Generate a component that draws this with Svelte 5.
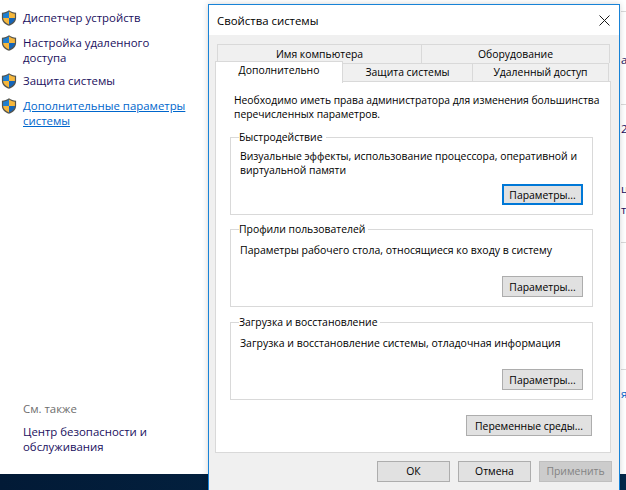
<script>
  const tasks = [
    { lines: 'Диспетчер устройств' },
    { lines: 'Настройка удаленного доступа' },
    { lines: 'Защита системы' },
    { lines: 'Дополнительные параметры системы', active: true }
  ];

  const groups = [
    { title: 'Быстродействие', text: 'Визуальные эффекты, использование процессора, оперативной и виртуальной памяти', focused: true },
    { title: 'Профили пользователей', text: 'Параметры рабочего стола, относящиеся ко входу в систему' },
    { title: 'Загрузка и восстановление', text: 'Загрузка и восстановление системы, отладочная информация' }
  ];

  // bits of the window behind the dialog, visible at the right edge
  const scraps = [
    { y: 52, ch: 'а' },
    { y: 121, ch: '2' },
    { y: 181, ch: 'ц' },
    { y: 202, ch: 'т' },
    { y: 386, ch: 'я', blue: true }
  ];
  const rules = [11, 104, 242, 369];
</script>

<div class="desktop">
  <aside class="sidebar">
    <ul class="tasks">
      {#each tasks as task}
        <li>
          <svg class="shield" width="16" height="16" viewBox="0 0 16 16" aria-hidden="true">
            <path d="M8 .2C6 1.800 3.400 2.600.9 2.700v5.200c0 3.600 3 6.400 7.100 7.900 4.100-1.500 7.100-4.300 7.100-7.900V2.700C12.600 2.600 10 1.800 8 .2z" fill="#55554e"/>
            <path d="M8 1.600C6.300 2.800 4.300 3.500 2.100 3.800V8H8z" fill="#1f7fd0"/>
            <path d="M8 1.600c1.700 1.200 3.700 1.900 5.900 2.200V8H8z" fill="#f6b73c"/>
            <path d="M2.100 8H8v6.400C4.600 13.100 2.100 10.900 2.100 8z" fill="#f6b73c"/>
            <path d="M13.900 8H8v6.400c3.400-1.300 5.900-3.500 5.900-6.400z" fill="#1565b8"/>
          </svg>
          <a href="#top" class:active={task.active}>{task.lines}</a>
        </li>
      {/each}
    </ul>

    <div class="see-also">
      <h2>См. также</h2>
      <a href="#top">Центр безопасности и обслуживания</a>
    </div>
  </aside>

  <div class="taskbar"></div>

  <div class="behind">
    {#each rules as y}
      <i class="rule" style="top: {y}px"></i>
    {/each}
    {#each scraps as s}
      <span class="scrap" class:blue={s.blue} style="top: {s.y}px">{s.ch}</span>
    {/each}
  </div>

  <section class="dialog">
    <header class="titlebar">
      <span>Свойства системы</span>
      <svg width="11" height="11" viewBox="0 0 11 11" aria-label="Закрыть">
        <path d="M.5.5l10 10M10.500.5l-10 10" stroke="#1a1a1a" fill="none"/>
      </svg>
    </header>

    <div class="body">
      <div class="tabs">
        <div class="tab-row back">
          <div class="tab">Имя компьютера</div>
          <div class="tab">Оборудование</div>
        </div>
        <div class="tab-row front">
          <div class="tab selected">Дополнительно</div>
          <div class="tab second">Защита системы</div>
          <div class="tab third">Удаленный доступ</div>
        </div>
      </div>

      <div class="panel">
        <p class="note">Необходимо иметь права администратора для изменения большинства перечисленных параметров.</p>

        {#each groups as group}
          <fieldset class="group">
            <legend>{group.title}</legend>
            <p>{group.text}</p>
            <div class="group-foot">
              <button class:focused={group.focused}>Параметры...</button>
            </div>
          </fieldset>
        {/each}

        <div class="env">
          <button class="wide">Переменные среды...</button>
        </div>
      </div>

      <footer class="actions">
        <button class="action">ОК</button>
        <button class="action">Отмена</button>
        <button class="action" disabled>Применить</button>
      </footer>
    </div>
  </section>
</div>

<style>
  :global(body) {
    margin: 0;
    background: #fff;
  }

  .desktop {
    position: relative;
    width: 626px;
    height: 490px;
    overflow: hidden;
    background: #fff;
    display: flex;
    flex-direction: column;
    font-family: "Open Sans", "Noto Sans", sans-serif;
    font-size: 11.4px;
    line-height: 15px;
    color: #000;
  }

  .sidebar {
    height: 474px;
    box-sizing: border-box;
    padding: 10px 0 0 0;
    display: flex;
    flex-direction: column;
    justify-content: space-between;
  }

  .tasks {
    list-style: none;
    margin: 0;
    padding: 0;
    display: flex;
    flex-direction: column;
    gap: 8.5px;
  }

  .tasks li {
    display: flex;
    gap: 6px;
    padding-left: 1px;
    width: 190px;
  }

  .shield {
    flex: none;
  }

  a {
    color: #1a0f5e;
    text-decoration: none;
  }

  a.active {
    color: #0066cc;
    text-decoration: underline;
  }

  .see-also {
    padding: 0 0 20px 23px;
    width: 160px;
  }

  .see-also h2 {
    margin: 0 0 8px;
    font-size: inherit;
    font-weight: 400;
    color: #6d6d6d;
  }

  .taskbar {
    height: 16px;
    background: linear-gradient(90deg, #021a36, #03213f 40%, #04284a);
  }

  .behind {
    position: absolute;
    top: 0;
    left: 620px;
    width: 6px;
    height: 474px;
    overflow: hidden;
  }

  .rule {
    position: absolute;
    left: 1px;
    width: 5px;
    height: 1px;
    background: #d9d9d9;
  }

  .scrap {
    position: absolute;
    left: 1px;
    color: #1a0f5e;
  }

  .scrap.blue {
    color: #0066cc;
  }

  .dialog {
    position: absolute;
    left: 208px;
    top: 4px;
    width: 412px;
    height: 486px;
    box-sizing: border-box;
    border: 1px solid #1883d7;
    border-bottom: 0;
    background: #f0f0f0;
    box-shadow: 0 0 6px rgba(0, 0, 0, 0.18);
  }

  .titlebar {
    height: 30px;
    background: #fff;
    display: flex;
    align-items: center;
    justify-content: space-between;
    padding: 0 9px 0 8px;
  }

  .body {
    padding: 9px 7px 0 6px;
    font-size: 10.4px;
    line-height: 14px;
  }

  .tabs {
    display: flex;
    flex-direction: column;
  }

  .tab-row {
    display: flex;
    text-align: center;
  }

  .back {
    height: 18px;
    margin: 0 2px;
    border: 1px solid #d9d9d9;
    border-bottom: 0;
  }

  .back .tab {
    flex: none;
    width: 203px;
    line-height: 18px;
  }

  .back .tab + .tab {
    flex: 1;
    border-left: 1px solid #d9d9d9;
  }

  .front {
    height: 20px;
    margin-top: -2px;
    position: relative;
  }

  .tab.selected {
    width: 126px;
    height: 21px;
    background: #fff;
    border: 1px solid #d9d9d9;
    border-bottom: 0;
    line-height: 17px;
    position: relative;
    z-index: 1;
  }

  .tab.second,
  .tab.third {
    margin-top: 2px;
    height: 18px;
    background: #f0f0f0;
    border: 1px solid #d9d9d9;
    border-left: 0;
    border-bottom: 0;
    line-height: 17px;
    box-sizing: border-box;
  }

  .tab.second {
    width: 130px;
  }

  .tab.third {
    width: 136px;
  }

  .panel {
    box-sizing: border-box;
    height: 372px;
    background: #fff;
    border: 1px solid #d9d9d9;
    padding: 11px 17px 0 14px;
    margin-right: 1px;
  }

  .note {
    margin: 0 -12px 9px 4px;
    font-size: 10.3px;
  }

  .group {
    margin: 0 0 7px;
    padding: 0 9px 9px;
    height: 85px;
    box-sizing: border-box;
    border: 1px solid #d9d9d9;
    min-width: 0;
    display: flex;
    flex-direction: column;
  }

  .group + .group + .group {
    margin-top: 8px;
  }

  .group legend {
    padding: 0 3px 0 0;
    margin-left: -1px;
    line-height: 14px;
  }

  .group p {
    margin: 7px 0 0;
    flex: 1;
    font-size: 10.5px;
  }

  .note + .group p {
    margin-top: 6px;
    line-height: 13.500px;
    font-size: 10.4px;
  }

  .group-foot {
    display: flex;
    justify-content: flex-end;
  }

  button {
    box-sizing: border-box;
    font: inherit;
    color: #000;
    height: 21px;
    width: 81px;
    padding: 0;
    background: #e1e1e1;
    border: 1px solid #adadad;
    border-radius: 0;
  }

  button.focused {
    border: 2px solid #0078d7;
  }

  .env {
    display: flex;
    justify-content: flex-end;
    margin: 15px 1px 0 0;
  }

  button.wide {
    width: 126px;
  }

  .actions {
    display: flex;
    justify-content: flex-end;
    gap: 8px;
    margin-top: 8px;
  }

  button.action {
    width: 73px;
    padding-bottom: 2px;
  }

  button:disabled {
    background: #ccc;
    border-color: #bfbfbf;
    color: #838383;
  }
</style>
